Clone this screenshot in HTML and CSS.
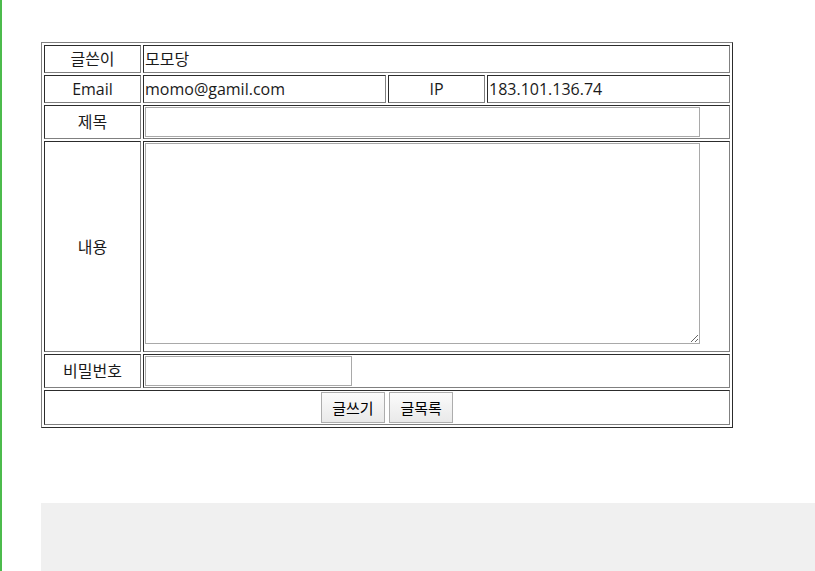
FILE: index.html
```html
<!DOCTYPE html>
<html lang="ko">
<head>
  <meta charset="UTF-8" />
  <meta name="viewport" content="width=device-width, initial-scale=1.0"/>
  <title>글쓰기</title>
  <link rel="stylesheet" href="styles.css">
</head>
<body>
  <div class="page">
    <form class="write-form">
      <table class="board">
        <colgroup>
          <col class="c-label">
          <col class="c-email">
          <col class="c-ip">
          <col class="c-ipval">
        </colgroup>
        <tr>
          <td class="label">글쓴이</td>
          <td colspan="3">모모당</td>
        </tr>
        <tr>
          <td class="label">Email</td>
          <td>momo@gamil.com</td>
          <td class="label">IP</td>
          <td>183.101.136.74</td>
        </tr>
        <tr>
          <td class="label">제목</td>
          <td colspan="3"><input type="text" class="title-input"></td>
        </tr>
        <tr>
          <td class="label">내용</td>
          <td colspan="3"><textarea class="content-input"></textarea></td>
        </tr>
        <tr>
          <td class="label">비밀번호</td>
          <td colspan="3"><input type="password" class="pass-input"></td>
        </tr>
        <tr>
          <td colspan="4" class="actions">
            <button type="submit">글쓰기</button>
            <button type="button">글목록</button>
          </td>
        </tr>
      </table>
    </form>
    <div class="footer"></div>
  </div>
</body>
</html>
```

FILE: styles.css
```css
body {
  margin: 0;
  font-family: "Open Sans", "Noto Sans CJK KR", sans-serif;
  font-size: 16px;
  color: #1a1a1a;
  background: #fff;
}
.page {
  border-left: 2px solid #4cbb4c;
  min-height: 571px;
  padding: 42px 0 0 39px;
  box-sizing: border-box;
}
.board {
  width: 692px;
  table-layout: fixed;
  border: 1px outset gray;
  border-spacing: 2px;
  line-height: 24px;
}
.board td {
  border: 1px inset gray;
  padding: 1px;
}
.c-label { width: 97px; }
.c-email { width: 243px; }
.c-ip { width: 97px; }
.c-ipval { width: 243px; }
.label { text-align: center; }
.title-input,
.pass-input {
  display: block;
  height: 30px;
  box-sizing: border-box;
  border: 1px solid #a9a9a9;
  margin: 0;
}
.title-input { width: 555px; }
.pass-input { width: 207px; }
.content-input {
  display: block;
  width: 555px;
  height: 201px;
  box-sizing: border-box;
  border: 1px solid #a9a9a9;
  margin: 0 0 6px 0;
  resize: vertical;
}
.actions { text-align: center; }
.actions button {
  font-family: "Noto Sans CJK KR", sans-serif;
  font-size: 15px;
  color: #000;
  width: 64px;
  height: 31px;
  padding: 0;
  border: 1px solid #adadad;
  background: linear-gradient(#fbfbfb, #e9e9e9);
  vertical-align: middle;
}
.footer {
  margin-top: 75px;
  height: 69px;
  background: #f0f0f0;
}
```
